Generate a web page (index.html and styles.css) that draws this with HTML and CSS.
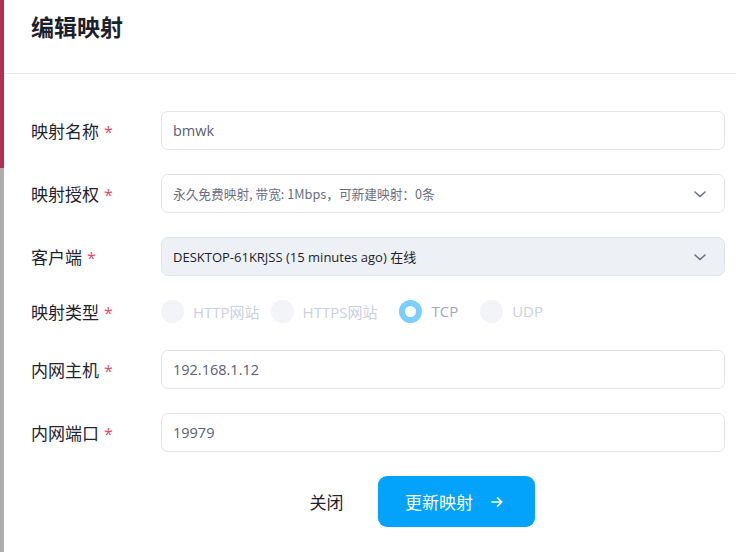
FILE: index.html
```html
<!DOCTYPE html>
<html lang="zh">
<head>
<meta charset="utf-8">
<link rel="stylesheet" href="styles.css">
</head>
<body>
<div class="page">
  <div class="edge"><div class="edge-top"></div><div class="edge-bottom"></div></div>
  <div class="modal">
    <div class="header"><h1>编辑映射</h1></div>
    <form class="form">
      <div class="row">
        <label class="label">映射名称<span class="req">*</span></label>
        <div class="field input">bmwk</div>
      </div>
      <div class="row">
        <label class="label">映射授权<span class="req">*</span></label>
        <div class="field select small">永久免费映射, 带宽: 1Mbps，可新建映射：0条
          <svg class="chev" viewBox="0 0 16 16" width="16" height="16"><path d="M3 6l5 4.5L13 6" fill="none" stroke="#6b6f82" stroke-width="1.6" stroke-linecap="round" stroke-linejoin="round"/></svg>
        </div>
      </div>
      <div class="row">
        <label class="label">客户端<span class="req">*</span></label>
        <div class="field select disabled">DESKTOP-61KRJSS (15 minutes ago) 在线
          <svg class="chev" viewBox="0 0 16 16" width="16" height="16"><path d="M3 6l5 4.5L13 6" fill="none" stroke="#6b6f82" stroke-width="1.6" stroke-linecap="round" stroke-linejoin="round"/></svg>
        </div>
      </div>
      <div class="row radio-row">
        <label class="label">映射类型<span class="req">*</span></label>
        <div class="radios">
          <span class="radio"><span class="dot"></span>HTTP网站</span>
          <span class="radio wide"><span class="dot"></span>HTTPS网站</span>
          <span class="radio checked wide"><span class="dot"></span>TCP</span>
          <span class="radio"><span class="dot"></span>UDP</span>
        </div>
      </div>
      <div class="row">
        <label class="label">内网主机<span class="req">*</span></label>
        <div class="field input">192.168.1.12</div>
      </div>
      <div class="row">
        <label class="label">内网端口<span class="req">*</span></label>
        <div class="field input">19979</div>
      </div>
      <div class="actions">
        <button type="button" class="btn-close">关闭</button>
        <button type="button" class="btn-primary">更新映射
          <svg viewBox="0 0 16 16" width="16" height="16"><path d="M3 8h9.5M8.5 3.8l4.2 4.2-4.2 4.2" fill="none" stroke="#fff" stroke-width="1.6" stroke-linecap="round" stroke-linejoin="round"/></svg>
        </button>
      </div>
    </form>
  </div>
</div>
</body>
</html>
```
FILE: styles.css
```css
* { box-sizing: border-box; }
html, body { margin: 0; padding: 0; background: #fff; }
body {
  font-family: "Open Sans", "Noto Sans CJK SC", sans-serif;
  color: #1f2330;
  width: 736px;
  height: 552px;
  overflow: hidden;
}
.page { display: flex; height: 552px; }
.edge { width: 4px; display: flex; flex-direction: column; flex-shrink: 0; }
.edge-top { height: 168px; background: #b23150; }
.edge-bottom { flex: 1; background: #adadad; }
.modal { flex: 1; }
.header {
  height: 74px;
  border-bottom: 1px solid #ececf0;
  padding: 9px 0 0 27px;
}
.header h1 {
  margin: 0;
  font-family: "Noto Sans CJK SC", sans-serif;
  font-size: 23px;
  font-weight: 700;
  color: #1c1f2e;
  line-height: 34px;
}
.form { padding: 37px 11px 0 27px; }
.row {
  display: flex;
  align-items: center;
  height: 39px;
  margin-bottom: 24px;
}
.label {
  width: 130px;
  flex-shrink: 0;
  font-family: "Noto Sans CJK SC", sans-serif;
  font-size: 17px;
  color: #1f2330;
}
.req { color: #f0466b; margin-left: 5px; font-family: "Open Sans", sans-serif; font-size: 16px; }
.field {
  flex: 1;
  height: 39px;
  border: 1px solid #e3e4ee;
  border-radius: 7px;
  display: flex;
  align-items: center;
  padding: 0 11px;
  font-size: 14.5px;
  color: #5b6075;
  background: #fff;
}
.select { justify-content: space-between; }
.select.small { font-family: "Noto Sans CJK SC", sans-serif; font-size: 12.7px; color: #6a6e80; }
.select.disabled { background: #edf0f4; color: #1c1f2e; font-size: 13px; }
.chev { margin-right: 5px; }
.radio-row { height: 22px; margin-bottom: 28px; }
.radios { display: flex; align-items: center; }
.radio {
  display: flex;
  align-items: center;
  font-size: 15px;
  color: #cdcfdc;
  margin-right: 11px;
}
.radio.wide { margin-right: 22px; }
.dot {
  width: 23px;
  height: 23px;
  border-radius: 50%;
  background: #f3f4f8;
  margin-right: 9px;
}
.radio.checked { color: #a5a8ba; }
.radio.checked .dot { background: #fff; border: 6px solid #7ccefd; }
.actions {
  display: flex;
  justify-content: center;
  align-items: center;
  padding-left: 88px;
}
.btn-close {
  border: none;
  background: none;
  font-family: "Noto Sans CJK SC", sans-serif;
  font-size: 17px;
  color: #1f2330;
  padding: 0;
  margin-right: 34px;
}
.btn-primary {
  width: 157px;
  height: 51px;
  border: none;
  border-radius: 9px;
  background: #03a2fb;
  color: #fff;
  font-family: "Noto Sans CJK SC", sans-serif;
  font-size: 17px;
  display: flex;
  align-items: center;
  justify-content: center;
  gap: 16px;
  padding-left: 4px;
}
```
